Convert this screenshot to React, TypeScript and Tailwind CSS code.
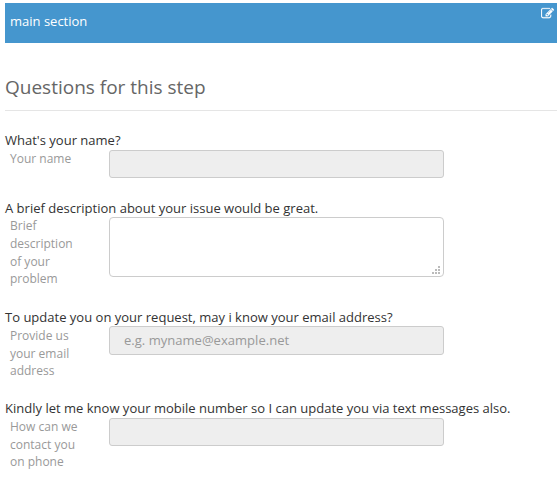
import React from "react";

interface FieldProps {
  question: string;
  hint: string[];
  className: string;
  hintClassName?: string;
  children: React.ReactNode;
}

function Field({ question, hint, className, hintClassName = "", children }: FieldProps) {
  return (
    <div className={className}>
      <div className="h-5 text-[13.02px] leading-5 whitespace-nowrap text-[#333]">{question}</div>
      <div className="flex items-start">
        <label className={`w-[104px] shrink-0 pl-[5px] text-[12px] leading-[17.7px] text-[#999] ${hintClassName}`}>
          {hint.map((line) => (
            <span key={line} className="block whitespace-nowrap">{line}</span>
          ))}
        </label>
        {children}
      </div>
    </div>
  );
}

function EditIcon() {
  return (
    <svg className="-mr-px mt-1 size-[13px]" viewBox="0 0 1792 1792" fill="currentColor" stroke="currentColor" strokeWidth="30">
      <path d="M888 1184l116-116-152-152-116 116v56h96v96h56zm440-720q-16-16-33 1l-350 350q-17 17-1 33t33-1l350-350q17-17 1-33zm80 594v190q0 119-84.5 203.5t-203.5 84.5h-832q-119 0-203.5-84.5t-84.5-203.5v-832q0-119 84.5-203.5t203.5-84.5h832q63 0 117 25 15 7 18 23 3 17-9 29l-49 49q-14 14-32 8-23-6-45-6h-832q-66 0-113 47t-47 113v832q0 66 47 113t113 47h832q66 0 113-47t47-113v-126q0-13 9-22l64-64q15-15 35-7t20 29zm-96-738l288 288-672 672h-288v-288zm444 132l-92 92-288-288 92-92q28-28 68-28t68 28l152 152q28 28 28 68t-28 68z" />
    </svg>
  );
}

export default function App() {
  return (
    <main className="h-[481px] overflow-hidden bg-white pt-[3px] pr-[3px] pl-[5px] font-['Open_Sans',sans-serif]">
      <header className="flex h-10 items-start justify-between bg-[#4596ce] pr-1 pl-[5px] text-white">
        <span className="pt-2 text-[13px] leading-5">main section</span>
        <EditIcon />
      </header>
      <h2 className="mt-[25px] h-[43px] border-b border-[#e5e5e5] text-[19px] leading-[38px] text-[#666]">
        Questions for this step
      </h2>
      <form className="pt-[19px]">
        <Field question="What's your name?" hint={["Your name"]} className="h-[68px]">
          <input disabled className="h-7 w-[335px] rounded-[3px] border border-[#ccc] bg-[#eee]" />
        </Field>
        <Field
          question="A brief description about your issue would be great."
          hint={["Brief", "description", "of your", "problem"]}
          className="h-[109px]"
          hintClassName="-mt-[0.8px]"
        >
          <div className="relative -mt-px h-[60px] w-[335px]">
            <textarea className="block size-full resize-none rounded-[4px] border border-[#ccc] bg-white" />
            <svg className="absolute right-1 bottom-[3px] h-2 w-2" viewBox="0 0 8 8" fill="#bbb" shapeRendering="crispEdges">
              <path d="M6 0h2v2H6zM3 3h2v2H3zM6 3h2v2H6zM0 6h2v2H0zM3 6h2v2H3zM6 6h2v2H6z" />
            </svg>
          </div>
        </Field>
        <Field
          question="To update you on your request, may i know your email address?"
          hint={["Provide us", "your email", "address"]}
          className="h-[91px]"
        >
          <input
            disabled
            placeholder="e.g. myname@example.net"
            className="-mt-px h-[29px] w-[335px] rounded-[3px] border border-[#ccc] bg-[#eee] px-3.5 pb-0.5 text-[13.05px] placeholder:text-[#999]"
          />
        </Field>
        <Field
          question="Kindly let me know your mobile number so I can update you via text messages also."
          hint={["How can we", "contact you", "on phone"]}
          className=""
        >
          <input disabled className="h-7 w-[335px] rounded-[3px] border border-[#ccc] bg-[#eee]" />
        </Field>
      </form>
    </main>
  );
}
